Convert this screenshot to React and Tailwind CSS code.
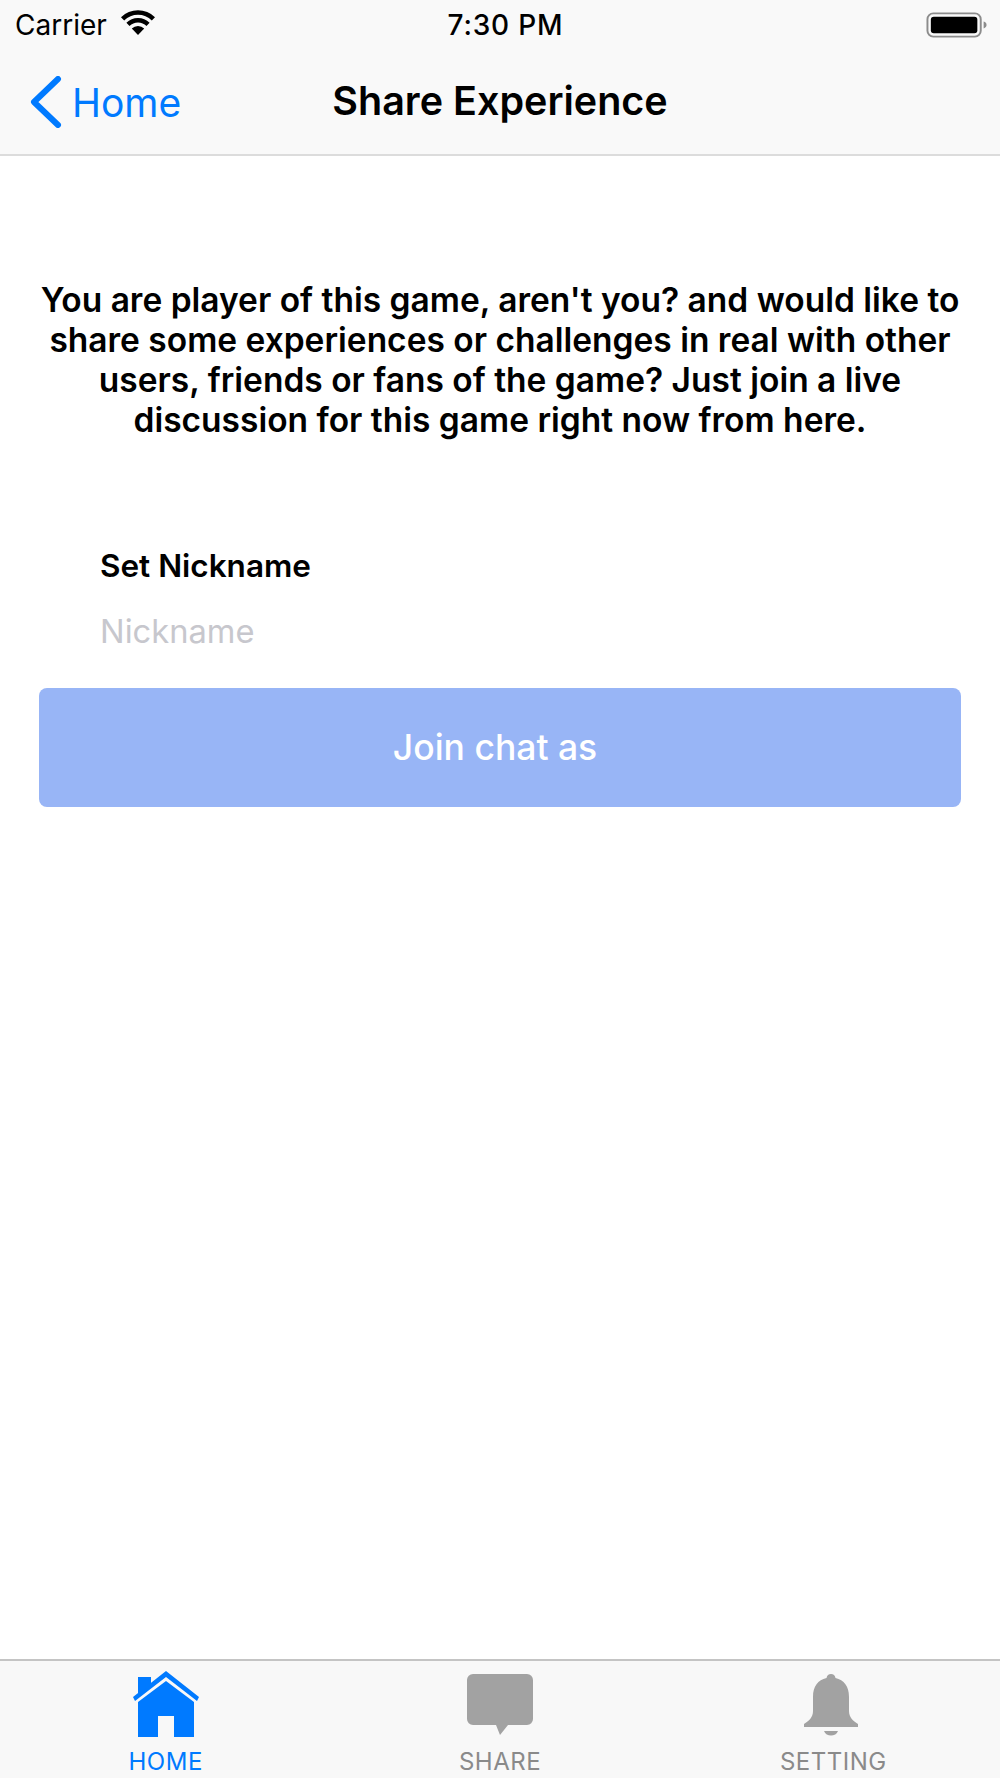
export default function App() {
  return (
    <div className="flex h-[1778px] w-[1000px] flex-col overflow-hidden bg-white font-['Inter',sans-serif] text-black">
      <header className="flex h-[156px] shrink-0 flex-col border-b-2 border-[#dcdcdc] bg-[#f9f9f9]">
        <div className="grid h-[50px] grid-cols-[1fr_auto_1fr] items-center px-[15px]">
          <div className="flex items-center gap-[13px]">
            <span className="text-[28px] leading-none">Carrier</span>
            <svg width="36" height="26" viewBox="0 0 36 26" className="-mt-1">
              <path d="M18 25 11.800 18.600a8.800 8.800 0 0 1 12.400 0Z" fill="#000" />
              <path d="M9.500 16 6.400 12.800a16.400 16.400 0 0 1 23.200 0L26.500 16a12 12 0 0 0-17 0Z" fill="#000" />
              <path d="M4.200 10.500 1 7.200a24.200 24.200 0 0 1 34 0l-3.200 3.300a19.600 19.600 0 0 0-27.600 0Z" fill="#000" />
            </svg>
          </div>
          <span className="pl-[11px] text-[28px] font-medium leading-none tracking-[0.8px]">7:30 PM</span>
          <div className="-mr-[3px] flex justify-end">
            <svg width="62" height="28" viewBox="0 0 64 28">
              <rect x="1.500" y="2" width="55" height="24" rx="6" fill="none" stroke="#8c8c8c" strokeWidth="2" />
              <rect x="5" y="5.500" width="48" height="17" rx="3" fill="#000" />
              <path d="M59.500 10.500c2 .6 3 2 3 3.500s-1 2.900-3 3.500Z" fill="#8c8c8c" />
            </svg>
          </div>
        </div>
        <nav className="grid flex-1 grid-cols-[1fr_auto_1fr] items-center px-[30px]">
          <a className="flex items-center gap-[10px] text-[#007aff]">
            <svg width="32" height="52" viewBox="0 0 32 52" fill="none" stroke="#007aff" strokeWidth="6" strokeLinecap="round" strokeLinejoin="round">
              <path d="M28 3 4 26l24 23" />
            </svg>
            <span className="text-[39px] leading-none">Home</span>
          </a>
          <h1 className="text-[39.500px] font-semibold leading-none">Share Experience</h1>
          <div />
        </nav>
      </header>

      <main className="flex flex-1 flex-col px-[39px] pt-[124px]">
        <p className="-mx-1 text-center text-[33.500px] font-semibold leading-[40px]">
          You are player of this game, aren't you? and would like to share some experiences or challenges in real with other users, friends or fans of the game? Just join a live discussion for this game right now from here.
        </p>
        <div className="mt-[108px] pl-[61px]">
          <label className="block text-[31.500px] font-semibold leading-[36px]">Set Nickname</label>
          <input
            placeholder="Nickname"
            className="mt-[28px] block h-[40px] w-full bg-transparent text-[32.700px] outline-none placeholder:text-[#c7c7cd]"
          />
        </div>
        <button className="mt-[36px] flex h-[119px] w-[922px] items-center justify-center rounded-[8px] bg-[#98b5f6] pr-[10px] pt-[1px] text-[35.500px] font-[550] text-white">
          Join chat as
        </button>
      </main>

      <footer className="grid h-[119px] shrink-0 grid-cols-3 border-t-2 border-[#c4c4c4] bg-[#f8f8f8]">
        <div className="-ml-[2px] flex flex-col items-center pt-[10px] text-[#007aff]">
          <svg width="68" height="68" viewBox="0 0 68 68" className="h-[68px]">
            <path d="M34 0 67 26l-2 4L34 6 3 30l-2-4Z" fill="#007aff" />
            <path d="M6 6h13v8L6 24Z" fill="#007aff" />
            <path d="M34 10 62 31V66H42V45H26V66H6V31Z" fill="#007aff" />
          </svg>
          <span className="mt-[9px] text-[24px] leading-[28px] tracking-[0.5px]">HOME</span>
        </div>
        <div className="flex flex-col items-center pt-[10px] text-[#8a8a8a]">
          <svg width="68" height="68" viewBox="0 0 68 68" className="h-[68px]">
            <path d="M7 3h54a6 6 0 0 1 6 6v39a6 6 0 0 1-6 6H42l-8 10-4-10H7a6 6 0 0 1-6-6V9a6 6 0 0 1 6-6Z" fill="#a2a2a2" />
          </svg>
          <span className="mt-[9px] text-[24px] leading-[28px] tracking-[0.5px]">SHARE</span>
        </div>
        <div className="flex flex-col items-center pt-[10px] text-[#8a8a8a]">
          <svg width="56" height="68" viewBox="0 0 56 68" className="-ml-[5px] h-[68px]">
            <path d="M28 3c2.500 0 4 1.500 4.500 4C41 9 46 15 46 26v14c0 6 4 10 9 13v3H1v-3c5-3 9-7 9-13V26C10 15 15 9 23.500 7c.5-2.500 2-4 4.500-4Z" fill="#a2a2a2" />
            <path d="M21 60h14c-1 3-4 4.500-7 4.500S22 63 21 60Z" fill="#a2a2a2" />
          </svg>
          <span className="mt-[9px] text-[24px] leading-[28px] tracking-[0.5px]">SETTING</span>
        </div>
      </footer>
    </div>
  );
}
